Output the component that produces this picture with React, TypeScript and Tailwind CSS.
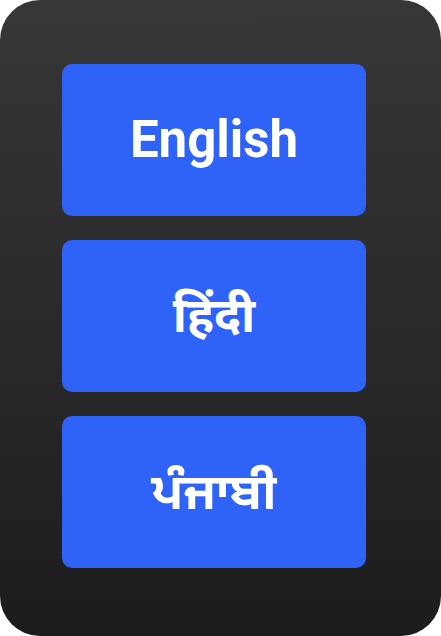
const languages = [
  { code: 'en', label: 'English', size: 'text-[51px]' },
  { code: 'hi', label: 'हिंदी', size: 'text-[48px]' },
  { code: 'pa', label: 'ਪੰਜਾਬੀ', size: 'text-[50px]' },
];

export default function App() {
  return (
    <div className="h-[636px] w-[441px] bg-white">
      <div className="flex h-full w-full flex-col gap-6 rounded-[40px] bg-gradient-to-b from-[#373737] via-[#2a2a2a] to-[#1c1c1c] pl-[62px] pr-[75px] pt-[64px]">
        {languages.map((lang) => (
          <button
            key={lang.code}
            type="button"
            className={`flex h-[152px] w-full items-center justify-center rounded-[10px] bg-[#2f62f7] font-bold text-white ${lang.size}`}
            style={{ fontFamily: 'Roboto, "Noto Sans", "Noto Sans Devanagari", "Noto Sans Gurmukhi", sans-serif' }}
          >
            {lang.label}
          </button>
        ))}
      </div>
    </div>
  );
}
